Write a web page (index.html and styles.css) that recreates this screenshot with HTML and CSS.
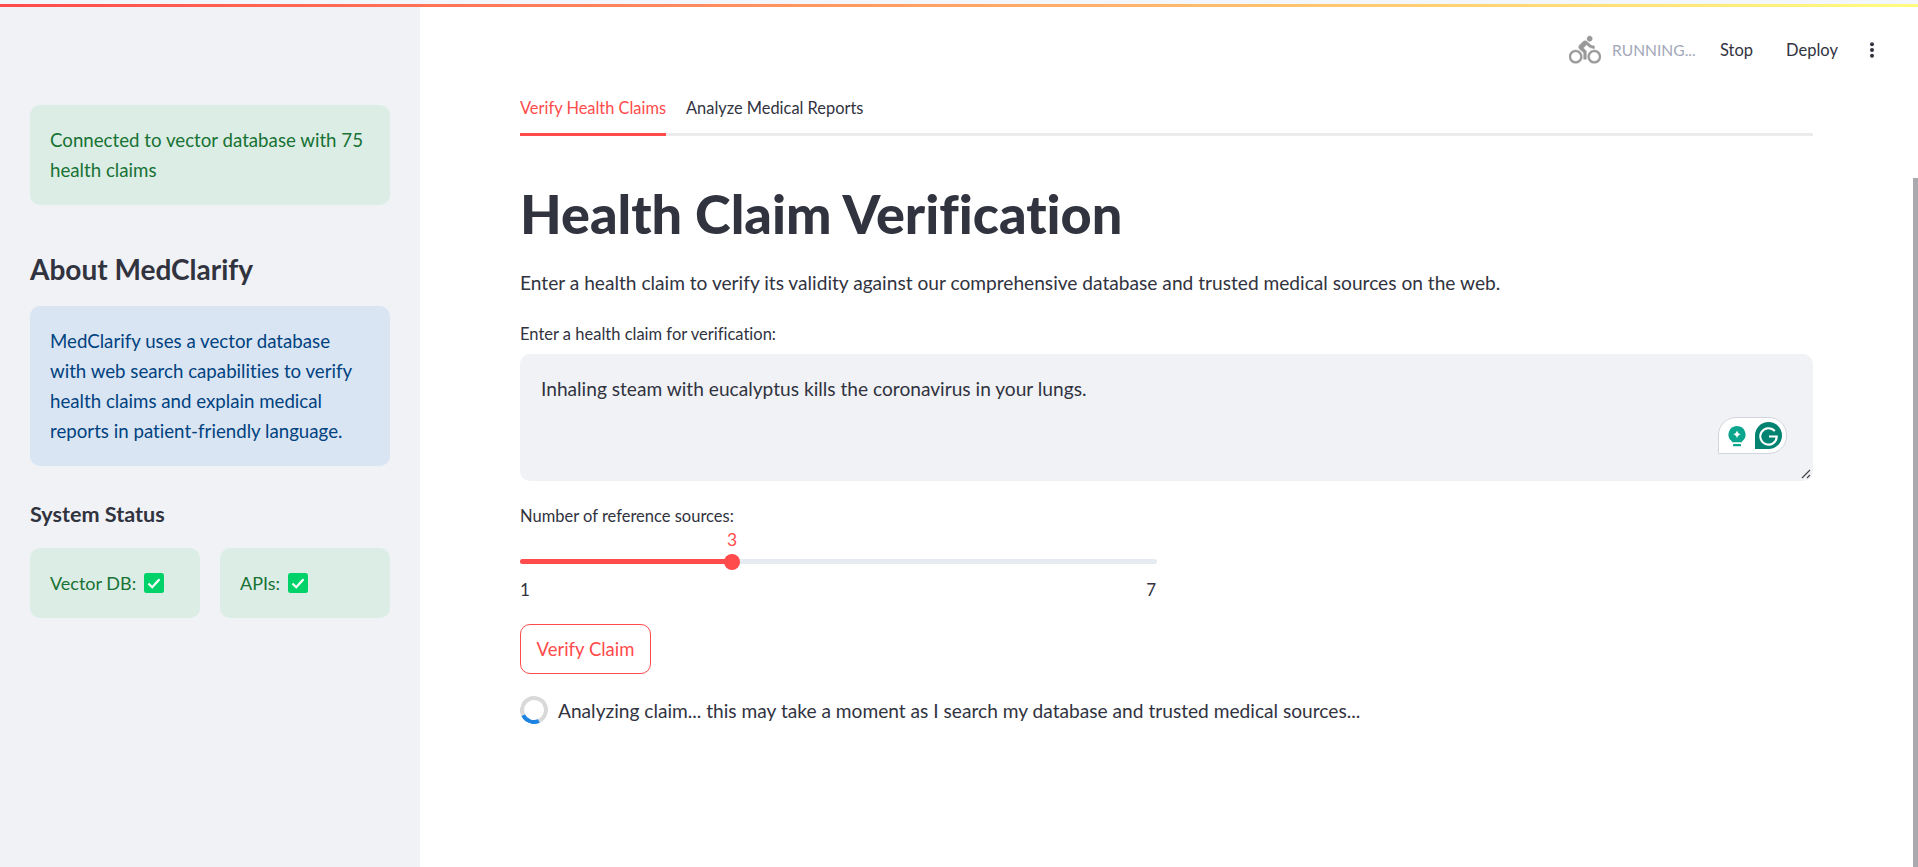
FILE: index.html
```html
<!DOCTYPE html>
<html lang="en">
<head>
<meta charset="utf-8">
<title>MedClarify</title>
<link rel="stylesheet" href="styles.css">
</head>
<body>
<div class="browser-edge"></div>
<div class="decoration"></div>
<div class="app">
  <aside class="sidebar">
    <div class="alert success first">Connected to vector database with 75 health claims</div>
    <h2 class="side-title">About MedClarify</h2>
    <div class="alert info">MedClarify uses a vector database with web search capabilities to verify health claims and explain medical reports in patient-friendly language.</div>
    <h3 class="side-sub">System Status</h3>
    <div class="status-row">
      <div class="alert success status">Vector DB: <svg class="check" viewBox="0 0 20 20"><rect width="20" height="20" rx="2.5" fill="#00d26a"/><path d="M4.5 10.5l3.7 3.7 7.3-8" fill="none" stroke="#fff" stroke-width="2.2"/></svg></div>
      <div class="alert success status">APIs: <svg class="check" viewBox="0 0 20 20"><rect width="20" height="20" rx="2.5" fill="#00d26a"/><path d="M4.5 10.5l3.7 3.7 7.3-8" fill="none" stroke="#fff" stroke-width="2.2"/></svg></div>
    </div>
  </aside>
  <main class="main">
    <header class="toolbar">
      <svg class="bike" viewBox="0 0 24 24"><path fill="#999" stroke="#999" stroke-width=".3" d="M15.5 5.5c1.1 0 2-.9 2-2s-.9-2-2-2-2 .9-2 2 .9 2 2 2zM5 12c-2.800 0-5 2.200-5 5s2.200 5 5 5 5-2.200 5-5-2.200-5-5-5zm0 8.500c-1.900 0-3.500-1.600-3.500-3.500s1.600-3.500 3.500-3.500 3.500 1.600 3.500 3.500-1.600 3.500-3.500 3.500zm5.800-10l2.400-2.400.8.800c1.300 1.300 3 2.100 5.100 2.100V9c-1.500 0-2.700-.6-3.600-1.500l-1.900-1.900c-.5-.4-1-.6-1.600-.6s-1.100.2-1.400.6L7.800 8.400c-.4.400-.6.900-.6 1.400 0 .6.200 1.100.6 1.400L11 14v5h2v-6.200l-2.200-2.300zM19 12c-2.800 0-5 2.200-5 5s2.200 5 5 5 5-2.200 5-5-2.200-5-5-5zm0 8.500c-1.900 0-3.500-1.600-3.500-3.500s1.600-3.500 3.500-3.500 3.500 1.600 3.500 3.500-1.600 3.500-3.500 3.500z"/></svg>
      <span class="running">RUNNING...</span>
      <span class="tool stop">Stop</span>
      <span class="tool deploy">Deploy</span>
      <svg class="dots" viewBox="0 0 6 16"><circle cx="3" cy="2.2" r="2" fill="#31333f"/><circle cx="3" cy="8" r="2" fill="#31333f"/><circle cx="3" cy="13.8" r="2" fill="#31333f"/></svg>
    </header>
    <div class="content">
      <nav class="tabs">
        <span class="tab active">Verify Health Claims</span>
        <span class="tab">Analyze Medical Reports</span>
      </nav>
      <h1 class="title">Health Claim Verification</h1>
      <p class="lead">Enter a health claim to verify its validity against our comprehensive database and trusted medical sources on the web.</p>
      <label class="label first-label">Enter a health claim for verification:</label>
      <div class="textarea">
        Inhaling steam with eucalyptus kills the coronavirus in your lungs.
        <div class="grammarly">
          <svg class="bulb" viewBox="0 0 20 24"><path d="M10 1a9.500 9.500 0 0 0-5.500 17.200V19h11v-.8A9.500 9.500 0 0 0 10 1z" fill="#0aa58c"/><path d="M10 5.500c.6 2.600 1.700 3.800 4.300 4.500-2.600.7-3.700 1.900-4.300 4.500-.6-2.600-1.700-3.800-4.300-4.500 2.600-.7 3.700-1.900 4.300-4.500z" fill="#fff"/><rect x="5.500" y="21" width="9" height="2.500" rx="1" fill="#0aa58c"/></svg>
          <svg class="gmark" viewBox="0 0 28 28"><path d="M14 0a14 14 0 0 1 0 28H0V14A14 14 0 0 1 14 0z" fill="#028270"/><path d="M20.500 9.500A8.500 8.500 0 1 0 22.500 15H14.500" fill="none" stroke="#fff" stroke-width="2.200"/></svg>
        </div>
        <svg class="resize" viewBox="0 0 10 10"><path d="M1 9l8-8M6 9l3-3" stroke="#444" stroke-width="1.200"/></svg>
      </div>
      <label class="label slider-label">Number of reference sources:</label>
      <div class="slider">
        <div class="slider-value">3</div>
        <div class="track"><div class="fill"></div><div class="thumb"></div></div>
        <div class="ticks"><span>1</span><span>7</span></div>
      </div>
      <button class="verify">Verify Claim</button>
      <div class="spin-row"><div class="spinner"></div><span>Analyzing claim... this may take a moment as I search my database and trusted medical sources...</span></div>
    </div>
  </main>
  <div class="scrollbar"></div>
</div>
</body>
</html>
```

FILE: styles.css
```css
* { box-sizing: border-box; }
html, body { margin: 0; height: 100%; overflow: hidden; }
body {
  width: 1918px;
  height: 867px;
  font-family: "Lato", "Noto Sans", sans-serif;
  font-variant-ligatures: none;
  font-size: 18.7px;
  color: #31333f;
  background: #fff;
  position: relative;
}
.browser-edge { height: 4px; background: #f3f7fb; }
.decoration {
  height: 3px;
  background: linear-gradient(90deg, #ff4b4b, #fffd80);
}
.app { display: flex; height: 860px; position: relative; }
.sidebar {
  width: 420px;
  flex: none;
  background: #f0f2f6;
  padding: 98px 30px 0;
}
.alert {
  border-radius: 10px;
  padding: 20px;
  line-height: 30px;
}
.success { background: #dcede6; color: #177233; }
.info { background: #dae5f3; color: #004280; padding-right: 30px; }
.first { height: 100px; }
.side-title {
  margin: 46px 0 19px;
  font-size: 28px;
  line-height: 36px;
  font-weight: 700;
  height: 36px;
}
.side-sub {
  margin: 34px 0 20px;
  font-size: 21.600px;
  line-height: 28px;
  font-weight: 700;
}
.status-row { display: flex; gap: 20px; }
.status {
  flex: 1;
  height: 70px;
  display: flex;
  align-items: center;
  gap: 8px;
  padding: 0 20px;
  font-size: 18px;
  white-space: nowrap;
}
.check { width: 20px; height: 20px; flex: none; }
.main { flex: 1; min-width: 0; position: relative; font-size: 19.150px; }
.toolbar {
  height: 78px;
  display: flex;
  align-items: center;
  padding-top: 7px;
}
.bike { width: 32px; height: 32px; margin-left: 1149px; flex: none; }
.running { margin-left: 11px; color: #a3a8b8; font-size: 15.600px; width: 84px; white-space: nowrap; }
.tool { font-size: 16.500px; white-space: nowrap; }
.stop { margin-left: 24px; width: 34px; }
.deploy { margin-left: 32px; width: 52px; }
.dots { width: 6px; height: 16px; margin-left: 31px; flex: none; }
.content { padding: 0 0 0 100px; width: 1393px; }
.tabs {
  display: flex;
  gap: 20px;
  border-bottom: 3px solid #ebebeb;
  height: 58px;
  padding-top: 7px;
  margin-top: -7px;
}
.tab { font-size: 16.400px; line-height: 32px; height: 51px; padding-top: 7px; white-space: nowrap; }
.tab.active { color: #ff4b4b; border-bottom: 3px solid #ff4b4b; }
.title {
  margin: 41px 0 0;
  font-size: 54px;
  line-height: 74px;
  font-weight: 900;
}
.lead { margin: 17px 0 0; line-height: 30px; }
.label { display: block; font-size: 16.500px; line-height: 22px; }
.first-label { margin-top: 25px; }
.textarea {
  margin-top: 9px;
  height: 127px;
  background: #f0f2f6;
  border-radius: 10px;
  padding: 20px 21px;
  line-height: 30px;
  position: relative;
}
.grammarly {
  position: absolute;
  left: 1198px;
  top: 63px;
  width: 69px;
  height: 37px;
  background: #fff;
  border: 1px solid #d3d5de;
  border-radius: 18px 18px 18px 0;
  display: flex;
  align-items: center;
  gap: 9px;
  padding-left: 9px;
}
.bulb { width: 18px; height: 22px; flex: none; }
.gmark { width: 27px; height: 27px; flex: none; }
.resize { position: absolute; right: 2px; bottom: 2px; width: 10px; height: 10px; }
.slider-label { margin-top: 24px; }
.slider { width: 637px; }
.slider-value { color: #ff4b4b; font-size: 17.500px; line-height: 20px; margin-top: 3px; padding-left: 207px; }
.track { margin-top: 9px; height: 5px; border-radius: 3px; background: #e6eaf1; position: relative; }
.fill { width: 212px; height: 5px; border-radius: 3px 0 0 3px; background: #ff4b4b; }
.thumb { position: absolute; left: 204px; top: -5.500px; width: 16px; height: 16px; border-radius: 50%; background: #ff4b4b; }
.ticks { display: flex; justify-content: space-between; margin-top: 15px; line-height: 22px; font-size: 17px; }
.ticks span:last-child { margin-right: 1px; }
.verify {
  display: block;
  margin-top: 23px;
  width: 131px;
  height: 50px;
  background: #fff;
  border: 1px solid #ff4b4b;
  border-radius: 10px;
  color: #ff4b4b;
  font: inherit;
  font-size: 18.500px;
  padding: 0;
}
.spin-row { display: flex; align-items: center; gap: 10px; margin-top: 22px; }
.spinner {
  width: 28px;
  height: 28px;
  border-radius: 50%;
  border: 4px solid #d9d9da;
  border-bottom-color: #1c83e1;
  transform: rotate(20deg);
  flex: none;
}
.scrollbar { position: absolute; right: 0; top: 171px; width: 5px; bottom: 0; background: #aaaaae; }
```
